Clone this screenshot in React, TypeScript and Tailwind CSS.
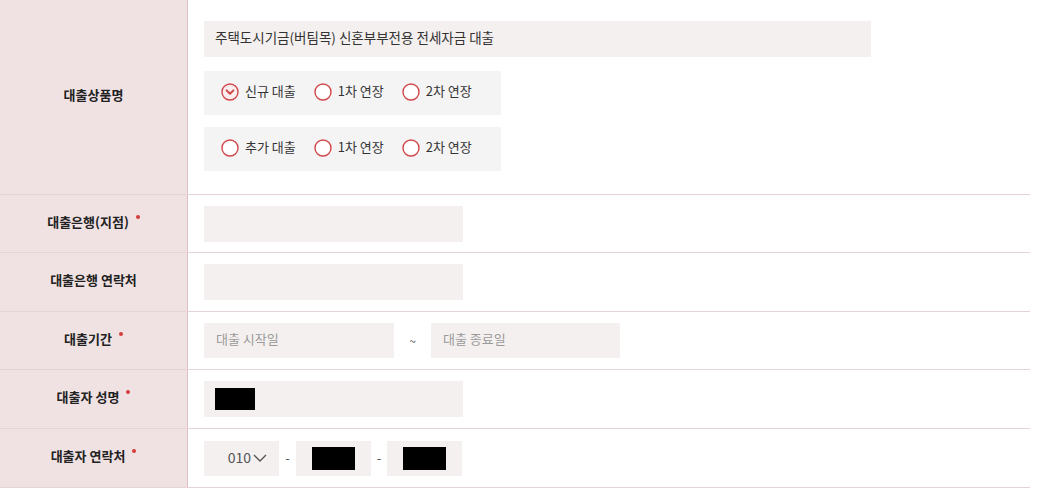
import React from "react";

const font = { fontFamily: '"Noto Sans CJK KR", "Noto Sans", sans-serif' };

function Radio({ checked, label }: { checked?: boolean; label: string }) {
  return (
    <div className="flex items-center gap-[6px]">
      <svg width="18" height="18" viewBox="0 0 18 18" className="relative -top-[1px]">
        <circle cx="9" cy="9" r="8" fill={checked ? "#fbeeee" : "#ffffff"} stroke="#d0494b" strokeWidth="1.4" />
        {checked && (
          <path d="M5.6 7.4 L9 10.8 L12.4 7.4" fill="none" stroke="#d0494b" strokeWidth="2" strokeLinecap="round" strokeLinejoin="round" />
        )}
      </svg>
      <span className="relative -top-[2px] text-[13px] text-[#333]">{label}</span>
    </div>
  );
}

function Label({ text, req }: { text: string; req?: boolean }) {
  return (
    <div className="bg-[#f0e1e2] border-r border-[#dcc2c6] flex items-center justify-center">
      <div className="relative -top-[2px] flex items-start">
        <span className="text-[13px] font-bold text-[#222]">{text}</span>
        {req && <span className="ml-[7px] mt-[3px] w-[4px] h-[4px] rounded-full bg-[#d43c3c]" />}
      </div>
    </div>
  );
}

function Row({ label, req, h, children }: { label: string; req?: boolean; h: string; children: React.ReactNode }) {
  return (
    <div className={`grid grid-cols-[188px_1fr] border-b border-[#e6d3d5] ${h}`}>
      <Label text={label} req={req} />
      <div className="flex items-center pl-[16px]">{children}</div>
    </div>
  );
}

export default function App() {
  return (
    <div className="w-[1030px] bg-white" style={font}>
      <div className="grid grid-cols-[188px_1fr] border-b border-[#e6d3d5] h-[195px]">
        <Label text="대출상품명" />
        <div className="pl-[16px] pt-[21px] flex flex-col">
          <div className="w-[667px] h-[36px] bg-[#f4f0ef] flex items-center pl-[11px] text-[13.5px] text-[#333]">
            <span className="relative -top-[2px]">주택도시기금(버팀목) 신혼부부전용 전세자금 대출</span>
          </div>
          <div className="mt-[14px] w-[297px] h-[44px] bg-[#f5f4f4] flex items-center pl-[17px] gap-[18px]">
            <Radio checked label="신규 대출" />
            <Radio label="1차 연장" />
            <Radio label="2차 연장" />
          </div>
          <div className="mt-[12px] w-[297px] h-[44px] bg-[#f5f4f4] flex items-center pl-[17px] gap-[18px]">
            <Radio label="추가 대출" />
            <Radio label="1차 연장" />
            <Radio label="2차 연장" />
          </div>
        </div>
      </div>
      <Row label="대출은행(지점)" req h="h-[58px]">
        <div className="w-[259px] h-[36px] bg-[#f4f0ef]" />
      </Row>
      <Row label="대출은행 연락처" h="h-[59px]">
        <div className="w-[259px] h-[36px] bg-[#f4f0ef]" />
      </Row>
      <Row label="대출기간" req h="h-[58px]">
        <div className="w-[190px] h-[35px] bg-[#f4f0ef] flex items-center pl-[12px] text-[13px] text-[#9a9a9a]">
          <span className="relative -top-[2px]">대출 시작일</span>
        </div>
        <div className="w-[37px] text-center text-[12px] text-[#555]">~</div>
        <div className="w-[189px] h-[35px] bg-[#f4f0ef] flex items-center pl-[12px] text-[13px] text-[#9a9a9a]">
          <span className="relative -top-[2px]">대출 종료일</span>
        </div>
      </Row>
      <Row label="대출자 성명" req h="h-[59px]">
        <div className="w-[259px] h-[36px] bg-[#f4f0ef] flex items-center pl-[11px]">
          <div className="w-[40px] h-[22px] bg-black" />
        </div>
      </Row>
      <Row label="대출자 연락처" req h="h-[59px]">
        <div className="w-[75px] h-[35px] bg-[#f4f0ef] flex items-center justify-end pr-[11px] gap-[1px] text-[14px] text-[#555]">
          <span className="relative -top-[1px]">010</span>
          <svg width="16" height="10" viewBox="0 0 16 10">
            <path d="M2 2 L8 8 L14 2" fill="none" stroke="#555" strokeWidth="1.4" />
          </svg>
        </div>
        <div className="w-[17px] text-center text-[13px] text-[#555]">-</div>
        <div className="w-[75px] h-[35px] bg-[#f4f0ef] flex items-center justify-center">
          <div className="w-[43px] h-[23px] bg-black" />
        </div>
        <div className="w-[16px] text-center text-[13px] text-[#555]">-</div>
        <div className="w-[75px] h-[35px] bg-[#f4f0ef] flex items-center justify-center">
          <div className="w-[43px] h-[23px] bg-black" />
        </div>
      </Row>
    </div>
  );
}
